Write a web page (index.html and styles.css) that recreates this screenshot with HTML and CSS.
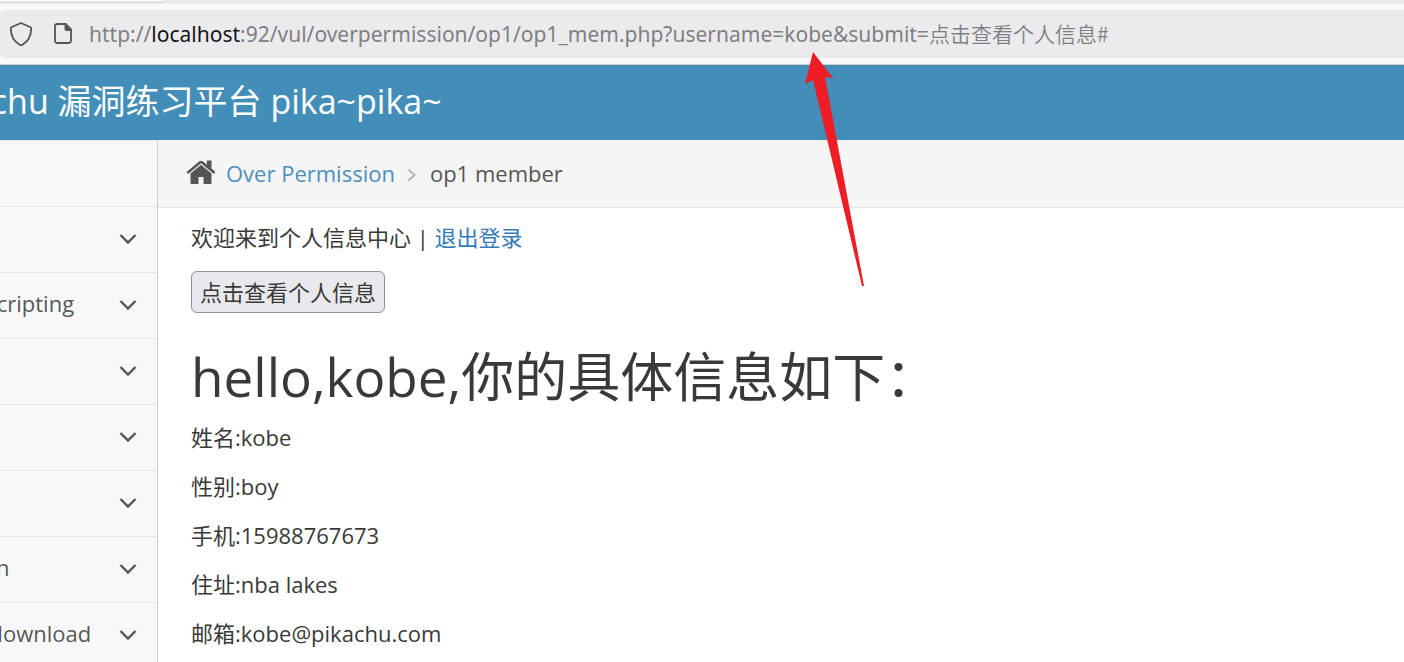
FILE: index.html
```html
<!DOCTYPE html>
<html lang="zh-CN">
<head>
<meta charset="utf-8">
<title>op1 member</title>
<link rel="stylesheet" href="styles.css">
</head>
<body>
<div class="tabstrip"><div class="tab"></div></div>
<div class="toolbar">
  <div class="urlbar">
    <svg class="url-icon" viewBox="0 0 24 26" fill="none" stroke="#555558" stroke-width="1.8" stroke-linejoin="round"><path d="M12 2 L21.6 6.3 Q22.2 6.6 22.2 7.3 C22.2 14 20 20 13.4 23.8 Q12 24.6 10.6 23.8 C4 20 1.800 14 1.800 7.300 Q1.800 6.600 2.400 6.300 Z"/></svg>
    <svg class="url-icon" viewBox="0 0 24 26"><path d="M15 3 H6.500 Q4 3 4 5.500 V19.500 Q4 22 6.500 22 H17.500 Q20 22 20 19.500 V8.500" fill="none" stroke="#555558" stroke-width="1.800"/><path d="M13.500 2.100 H15 L20.900 8 V10 H15.500 Q13.500 10 13.500 8 Z" fill="#555558"/></svg>
    <div class="url" role="textbox" contenteditable="true" spellcheck="false" aria-label="URL">http://<span class="host">localhost</span>:92/vul/overpermission/op1/op1_mem.php?username=kobe&amp;submit=<span class="query">点击查看个人信息#</span></div>
  </div>
</div>
<header class="navbar"><a class="brand" href="#">Pikachu 漏洞练习平台 pika~pika~</a></header>
<div class="layout">
  <nav class="sidebar">
    <a class="item" href="#"></a>
    <a class="item" href="#"><svg class="chevron" viewBox="0 0 18 12"><path d="M1.500 2 L9 9.500 L16.500 2"/></svg></a>
    <a class="item" href="#">Cross-Site Scripting<svg class="chevron" viewBox="0 0 18 12"><path d="M1.500 2 L9 9.500 L16.500 2"/></svg></a>
    <a class="item" href="#"><svg class="chevron" viewBox="0 0 18 12"><path d="M1.500 2 L9 9.500 L16.500 2"/></svg></a>
    <a class="item" href="#"><svg class="chevron" viewBox="0 0 18 12"><path d="M1.500 2 L9 9.500 L16.500 2"/></svg></a>
    <a class="item" href="#"><svg class="chevron" viewBox="0 0 18 12"><path d="M1.500 2 L9 9.500 L16.500 2"/></svg></a>
    <a class="item" href="#">File Inclusion<svg class="chevron" viewBox="0 0 18 12"><path d="M1.500 2 L9 9.500 L16.500 2"/></svg></a>
    <a class="item" href="#">Unsafe Filedownload<svg class="chevron" viewBox="0 0 18 12"><path d="M1.500 2 L9 9.500 L16.500 2"/></svg></a>
  </nav>
  <main class="main">
    <div class="breadcrumb">
      <svg class="home" viewBox="0 0 30 25" fill="#555"><path d="M15 4.800 L4.500 13.500 V22.800 Q4.500 24 5.700 24 H12.500 V17 H17.500 V24 H24.300 Q25.500 24 25.500 22.800 V13.500 Z"/><path d="M0.600 12 L13.300 1.300 Q15 0 16.700 1.300 L20.800 4.800 V1 Q20.800 0.400 21.400 0.400 H24.900 Q25.500 0.400 25.500 1 V8.600 L29.400 12 L27.800 13.900 L15 3.300 L2.200 13.900 Z"/></svg>
      <a class="crumb-link" href="#">Over Permission</a>
      <svg class="separator" viewBox="0 0 10 14"><path d="M1.500 1.500 L7.500 7 L1.500 12.500"/></svg>
      <span>op1 member</span>
    </div>
    <div class="content">
      <p class="welcome">欢迎来到个人信息中心 | <a href="#">退出登录</a></p>
      <form class="lookup"><button class="submit" type="button">点击查看个人信息</button></form>
      <h1 class="title">hello,kobe,你的具体信息如下：</h1>
      <p class="detail">姓名:kobe</p>
      <p class="detail">性别:boy</p>
      <p class="detail">手机:15988767673</p>
      <p class="detail">住址:nba lakes</p>
      <p class="detail">邮箱:kobe@pikachu.com</p>
    </div>
  </main>
</div>
<svg class="arrow" viewBox="0 0 60 236" fill="#ee1c24"><path d="M8 0 L28 26 L20 25 L59 234 L57 234 L8 28 L0 32 Z"/></svg>
</body>
</html>
```
FILE: styles.css
```css
* { box-sizing: border-box; }
html { height: 100%; overflow: hidden; }
body {
  margin: 0;
  height: 100vh;
  display: flex;
  flex-direction: column;
  overflow: hidden;
  position: relative;
  background: #fff;
  color: #393939;
  font-family: "Open Sans", "Noto Sans CJK SC", sans-serif;
  font-size: 22px;
}
a { color: #337ab7; text-decoration: none; }
svg { flex: none; }
.tabstrip { flex: none; height: 4px; background: #eae9ee; }
.tab { width: 164px; height: 1px; background: #fff; box-shadow: 0 0 3px #aaa; }
.toolbar { flex: none; height: 61px; padding-top: 6px; background: #f9f9fb; border-bottom: 1px solid #ccc; }
.urlbar {
  height: 48px;
  padding-left: 9px;
  display: flex;
  align-items: center;
  background: #ebebed;
  border-radius: 5px 0 0 5px;
}
.url-icon { width: 24px; height: 26px; margin-right: 18px; }
.url {
  flex: 1;
  margin-left: -4px;
  padding-bottom: 2px;
  color: #808083;
  font-family: "Noto Sans", "Noto Sans CJK SC", sans-serif;
  font-size: 21px;
  line-height: 30px;
  white-space: nowrap;
  outline: none;
}
.host { color: #15141a; }
.query { font-family: "Noto Sans CJK SC", sans-serif; font-weight: 350; }
.navbar { flex: none; height: 75px; padding-bottom: 3px; background: #438eb9; display: flex; align-items: center; overflow: hidden; }
.brand { color: #fff; font-size: 34px; line-height: 46px; margin-left: -75px; white-space: nowrap; }
.layout { flex: 1; min-height: 0; display: flex; }
.sidebar {
  flex: none;
  width: 298px;
  margin-left: -140px;
  overflow: hidden;
  background: #f8f8f8;
  border-right: 1px solid #ccc;
  border-top: 1px solid #e5e5e5;
}
.item {
  height: 66px;
  padding: 0 20px 5px 17px;
  display: flex;
  align-items: center;
  color: #585858;
  border-bottom: 1px solid #e5e5e5;
  white-space: nowrap;
}
.chevron { width: 18px; height: 12px; margin-left: auto; margin-top: 3px; fill: none; stroke: #555; stroke-width: 2.4; }
.main { flex: 1; min-width: 0; }
.breadcrumb {
  height: 68px;
  padding: 0 28px 2px;
  display: flex;
  align-items: center;
  background: #f5f5f5;
  border-bottom: 1px solid #e5e5e5;
  color: #555;
}
.home { width: 30px; height: 25px; margin-right: 10px; }
.crumb-link { color: #4c8fbd; }
.separator { width: 10px; height: 14px; margin: 5px 13px 0 12px; fill: none; stroke: #b2b6bf; stroke-width: 2; }
.content { padding: 13px 33px 0; }
.welcome { margin: 0 0 17px; line-height: 33px; }
.lookup { margin: 0; height: 42px; }
.submit {
  height: 42px;
  padding: 0 8px 3px;
  border: 1px solid #8f8f9d;
  border-radius: 6px;
  background: #e9e9ed;
  color: #393939;
  font: inherit;
}
.title { margin: 32px 0 12px; font-size: 53px; line-height: 64px; font-weight: 400; white-space: nowrap; }
.detail { margin: 0 0 16px; line-height: 33px; }
.arrow { position: absolute; left: 805px; top: 52px; width: 60px; height: 236px; pointer-events: none; }
```
